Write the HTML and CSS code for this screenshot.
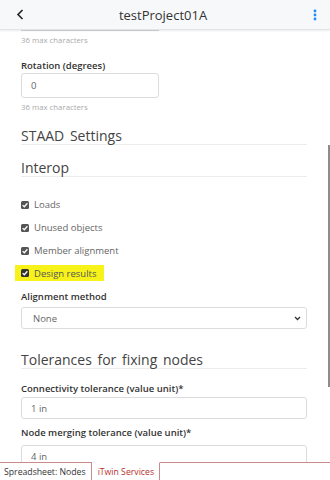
FILE: index.html
```html
<!DOCTYPE html>
<html lang="en">
<head>
    <meta charset="UTF-8">
    <meta name="viewport" content="width=device-width, initial-scale=1.0">
    <title>testProject01A</title>
    <link rel="stylesheet" href="styles.css">
</head>
<body>
    <div class="app">
        <header class="topbar">
            <button class="icon-btn back" aria-label="Back">
                <svg width="8" height="11" viewBox="0 0 8 11"><path d="M6.5 1 L2 5.5 L6.5 10" fill="none" stroke="#222" stroke-width="1.6"/></svg>
            </button>
            <h1>testProject01A</h1>
            <button class="icon-btn more" aria-label="More">
                <svg width="4" height="12" viewBox="0 0 4 12"><circle cx="2" cy="2" r="1.4" fill="#1a8cff"/><circle cx="2" cy="6" r="1.4" fill="#1a8cff"/><circle cx="2" cy="10" r="1.4" fill="#1a8cff"/></svg>
            </button>
        </header>

        <main class="content">
            <div class="field">
                <div class="input-stub"></div>
                <p class="hint">36 max characters</p>
            </div>

            <div class="field">
                <label class="label" for="rotation">Rotation (degrees)</label>
                <input class="input half" id="rotation" type="text" value="0">
                <p class="hint">36 max characters</p>
            </div>

            <h2 class="heading first">STAAD Settings</h2>
            <h2 class="heading">Interop</h2>

            <div class="checks">
                <label class="check"><span class="box"></span>Loads</label>
                <label class="check"><span class="box"></span>Unused objects</label>
                <label class="check"><span class="box"></span>Member alignment</label>
                <label class="check marked"><span class="box"></span>Design results</label>
            </div>

            <div class="field after-checks">
                <label class="label" for="align">Alignment method</label>
                <div class="select" id="align">
                    <span>None</span>
                    <svg width="7" height="5" viewBox="0 0 7 5"><path d="M1 1 L3.5 3.5 L6 1" fill="none" stroke="#333" stroke-width="1.3"/></svg>
                </div>
            </div>

            <h2 class="heading wide">Tolerances for fixing nodes</h2>

            <div class="field">
                <label class="label" for="conn">Connectivity tolerance (value unit)*</label>
                <input class="input" id="conn" type="text" value="1 in">
            </div>

            <div class="field after-input">
                <label class="label" for="merge">Node merging tolerance (value unit)*</label>
                <input class="input" id="merge" type="text" value="4 in">
            </div>
        </main>

        <nav class="tabs">
            <span class="tab">Spreadsheet: Nodes</span>
            <span class="tab active">iTwin Services</span>
            <span class="tab-fill"></span>
        </nav>

        <div class="scroll-thumb"></div>
    </div>
</body>
</html>
```

FILE: styles.css
```css
* {
    box-sizing: border-box;
}
body {
    margin: 0;
    font-family: 'Open Sans', 'Noto Sans', sans-serif;
    color: #333;
    background: #fff;
}
.app {
    position: relative;
    width: 330px;
    height: 480px;
    display: flex;
    flex-direction: column;
    overflow: hidden;
}
.topbar {
    position: relative;
    z-index: 2;
    height: 30px;
    flex: none;
    display: flex;
    align-items: center;
    padding: 0 13px 0 16px;
    background: #f7f8fa;
    border-bottom: 1px solid #e2e3e5;
    box-shadow: 0 1px 2px rgba(0, 0, 0, 0.08);
}
.topbar h1 {
    flex: 1;
    margin: 0;
    padding-right: 11px;
    text-align: center;
    font-size: 13px;
    font-weight: 400;
    color: #333;
}
.icon-btn {
    border: none;
    background: none;
    padding: 0;
    display: flex;
    align-items: center;
}
.content {
    flex: 1;
    overflow: hidden;
    padding: 0 23px 0 21px;
}
.field {
    display: flex;
    flex-direction: column;
    align-items: stretch;
}
.input-stub {
    width: 138px;
    height: 1px;
    background: #d4d4d4;
}
.hint {
    margin: 3px 0 0;
    font-size: 7.8px;
    line-height: 12px;
    color: #aaa;
}
.label {
    margin-top: 13px;
    font-size: 9.5px;
    line-height: 14px;
    font-weight: 600;
    color: #333;
}
.after-checks .label {
    margin-top: 9px;
}
.after-input .label {
    margin-top: 7px;
}
.input {
    display: block;
    width: 100%;
    height: 22px;
    margin-top: 1px;
    padding: 0 9px;
    border: 1px solid #dcdcdc;
    border-radius: 3px;
    font-family: inherit;
    font-size: 9.5px;
    color: #666;
    background: #fff;
}
.after-input .input {
    margin-top: 5px;
}
.input.half {
    width: 138px;
    height: 25px;
    margin-top: 0;
}
.heading {
    margin: 14px 0 0;
    font-size: 14px;
    font-weight: 400;
    line-height: 17px;
    word-spacing: 2px;
    color: #444;
    border-bottom: 1px solid #ececec;
}
.heading.wide {
    margin-top: 22px;
}
.checks {
    margin-top: 16px;
    display: flex;
    flex-direction: column;
}
.check {
    height: 23px;
    display: flex;
    align-items: center;
    font-size: 9.5px;
    color: #666;
}
.check .box {
    width: 8px;
    height: 8px;
    margin-right: 5px;
    border-radius: 1.5px;
    background: #555 url("data:image/svg+xml;utf8,<svg xmlns='http://www.w3.org/2000/svg' width='8' height='8' viewBox='0 0 8 8'><path d='M1.6 4.1 L3.3 5.7 L6.4 2.3' fill='none' stroke='white' stroke-width='1.3'/></svg>") center no-repeat;
}
.check.marked {
    align-self: flex-start;
    height: 16px;
    margin: 3px 0 0 -6px;
    padding: 0 7px 0 6px;
    background: #f7f31a;
    color: #555;
}
.check.marked .box {
    background-color: #333;
}
.select {
    height: 22px;
    margin-top: 3px;
    display: flex;
    align-items: center;
    justify-content: space-between;
    padding: 0 5px 0 11px;
    border: 1px solid #dcdcdc;
    border-radius: 3px;
    font-size: 9.5px;
    color: #666;
}
.tabs {
    height: 18px;
    flex: none;
    display: flex;
    background: #fff;
    font-size: 8.7px;
}
.tab {
    display: flex;
    align-items: center;
    padding: 0 5px 0 4px;
    border-top: 1px solid #c98a8a;
    border-right: 1px solid #c98a8a;
    color: #333;
}
.tab.active {
    border-top-color: transparent;
    color: #b8322c;
    padding: 0 5px 0 6px;
}
.tab-fill {
    flex: 1;
    border-top: 1px solid #c98a8a;
}
.scroll-thumb {
    position: absolute;
    right: 0;
    top: 145px;
    width: 2px;
    height: 242px;
    background: #8c8c8c;
}
```
